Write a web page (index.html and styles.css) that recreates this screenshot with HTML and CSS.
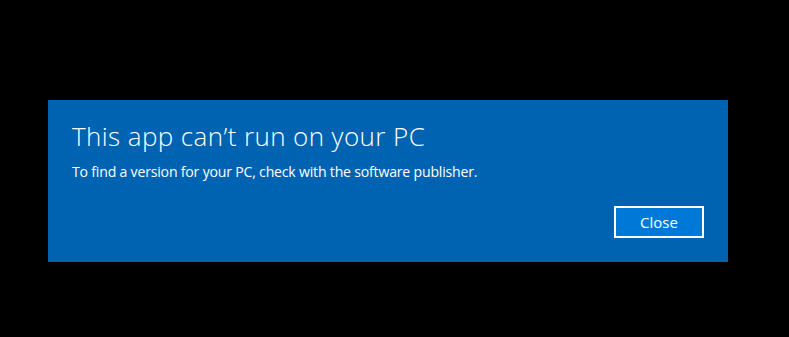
FILE: index.html
```html
<!DOCTYPE html>
<html>
<head>
<meta charset="utf-8">
<link rel="stylesheet" href="styles.css">
</head>
<body>
<div class="dialog">
  <h1 class="title">This app can’t run on your PC</h1>
  <p class="message">To find a version for your PC, check with the software publisher.</p>
  <div class="actions">
    <button class="btn">Close</button>
  </div>
</div>
</body>
</html>
```
FILE: styles.css
```css
html, body {
  margin: 0;
  padding: 0;
  background: #000;
  height: 100%;
}
body {
  padding-top: 100px;
  padding-left: 48px;
  box-sizing: border-box;
}
.dialog {
  width: 680px;
  height: 162px;
  box-sizing: border-box;
  background: #0063b1;
  padding: 19px 24px 24px 24px;
  color: #fff;
  font-family: "Open Sans", "Noto Sans", sans-serif;
  display: flex;
  flex-direction: column;
}
.title {
  margin: 0;
  font-weight: 300;
  font-size: 26px;
  line-height: 34px;
  letter-spacing: 0.4px;
}
.message {
  margin: 9px 0 0 0;
  font-size: 14.1px;
  line-height: 19px;
  letter-spacing: -0.2px;
}
.actions {
  display: flex;
  justify-content: flex-end;
  margin-top: auto;
}
.btn {
  width: 90px;
  height: 32px;
  background: #0078d7;
  border: 2px solid #fff;
  color: #fff;
  font-family: "Open Sans", "Noto Sans", sans-serif;
  font-size: 15px;
  padding: 0;
}
```
